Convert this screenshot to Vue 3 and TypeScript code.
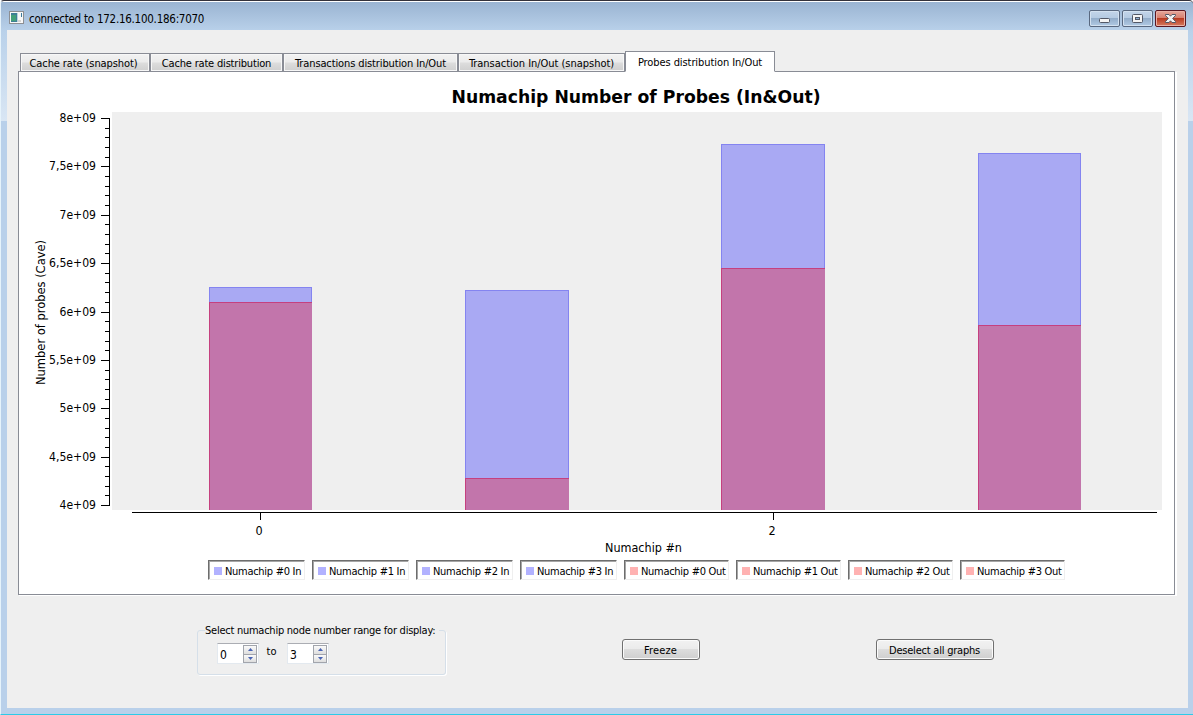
<script setup lang="ts">
import { ref } from 'vue'

interface Tab { label: string; width: number; spacing: number }
interface Bar { x: number; width: number; incoming: number; outgoing: number }

const tabs: Tab[] = [
  { label: 'Cache rate (snapshot)', width: 130, spacing: -0.1 },
  { label: 'Cache rate distribution', width: 133, spacing: -0.18 },
  { label: 'Transactions distribution In/Out', width: 175, spacing: -0.12 },
  { label: 'Transaction In/Out (snapshot)', width: 167, spacing: -0.03 },
  { label: 'Probes distribution In/Out', width: 150, spacing: -0.08 },
]
const active = ref(4)

const BASE = 510
const bars: Bar[] = [
  { x: 209, width: 103, incoming: 287, outgoing: 302 },
  { x: 465, width: 104, incoming: 290, outgoing: 478 },
  { x: 721, width: 104, incoming: 144, outgoing: 268 },
  { x: 978, width: 103, incoming: 153, outgoing: 325 },
]

const yLabels = ['8e+09', '7,5e+09', '7e+09', '6,5e+09', '6e+09', '5,5e+09', '5e+09', '4,5e+09', '4e+09']
const yTicks = Array.from({ length: 41 }, (_, i) => ({
  y: Math.round(118 + i * 9.675),
  major: i % 5 === 0,
  label: i % 5 === 0 ? yLabels[i / 5] : '',
}))

const legend = [
  ...[0, 1, 2, 3].map((n) => ({ text: `Numachip #${n} In`, kind: 'in' })),
  ...[0, 1, 2, 3].map((n) => ({ text: `Numachip #${n} Out`, kind: 'out' })),
]

const range = ref([0, 3])
function step(i: number, by: number) {
  range.value[i] = Math.min(3, Math.max(0, range.value[i] + by))
}
</script>

<template>
  <div class="window">
    <header class="titlebar">
      <svg class="app-icon" width="16" height="14" viewBox="0 0 16 14" shape-rendering="crispEdges">
        <rect x="0" y="0" width="15" height="13" fill="#8d8f93" />
        <rect x="1" y="1" width="13" height="11" fill="#f8f8f8" />
        <rect x="2" y="2" width="6" height="9" fill="#3f7f96" />
        <rect x="2" y="4" width="5" height="6" fill="#43a07a" />
        <rect x="8" y="2" width="1" height="9" fill="#b9d3dc" />
        <rect x="12" y="2" width="1" height="4" fill="#3b7a9c" />
        <rect x="9" y="9" width="3" height="2" fill="#d5d5d5" />
      </svg>
      <span class="title">connected to 172.16.100.186:7070</span>
      <div class="controls">
        <button class="ctl" aria-label="Minimize">
          <svg width="29" height="15" viewBox="0 0 29 15"><rect x="9.500" y="7.500" width="10" height="4" rx="1" fill="#f4f4f4" stroke="#535866" /></svg>
        </button>
        <button class="ctl" aria-label="Maximize">
          <svg width="29" height="15" viewBox="0 0 29 15"><rect x="9.500" y="3.500" width="10" height="8" rx="1" fill="#f4f4f4" stroke="#535866" /><rect x="12.500" y="6.500" width="4" height="2" fill="#8fb0d4" stroke="#535866" /></svg>
        </button>
        <button class="ctl close" aria-label="Close">
          <svg width="29" height="15" viewBox="0 0 29 15"><path d="M9.500 3.500H13L14.500 5.200L16 3.500H19.500V4.500L16.700 7.500L19.500 10.500V11.500H16L14.500 9.800L13 11.500H9.500V10.500L12.300 7.500L9.500 4.500Z" fill="#f2f2f2" stroke="#535866" /></svg>
        </button>
      </div>
    </header>

    <main class="client">
      <nav class="tabs">
        <button
          v-for="(t, i) in tabs"
          :key="t.label"
          class="tab"
          :class="{ active: i === active }"
          :style="{ width: t.width + 'px', letterSpacing: t.spacing + 'px' }"
          @click="active = i"
        >{{ t.label }}</button>
      </nav>

      <section class="panel">
        <svg class="chart" width="1155" height="487" viewBox="19 72 1155 487">
          <text class="heading" x="451.500" y="103" textLength="369" lengthAdjust="spacingAndGlyphs">Numachip Number of Probes (In&amp;Out)</text>
          <g shape-rendering="crispEdges">
            <rect x="112" y="112" width="1050" height="398" fill="#efefef" />
            <g v-for="b in bars" :key="b.x">
              <rect :x="b.x" :y="b.incoming" :width="b.width" :height="BASE - b.incoming" fill="#a9a9f3" />
              <path :d="`M${b.x + 0.5} ${BASE}V${b.incoming + 0.5}H${b.x + b.width - 0.5}V${BASE}`" fill="none" stroke="#8484f0" />
              <rect :x="b.x" :y="b.outgoing" :width="b.width" :height="BASE - b.outgoing" fill="#c275ab" />
              <path :d="`M${b.x + 0.5} ${BASE}V${b.outgoing + 0.5}H${b.x + b.width}`" fill="none" stroke="#c5407f" />
            </g>
            <path d="M109.500 118V506M132 512.500H1157M260.500 512V520M773.500 512V520" stroke="#000" />
            <path v-for="t in yTicks" :key="t.y" :d="`M${t.major ? 101 : 105} ${t.y + 0.5}H110`" stroke="#000" />
          </g>
          <template v-for="t in yTicks" :key="t.y">
            <text
              v-if="t.major"
              class="num"
              :x="t.label.length > 5 ? 49 : 59.500"
              :y="t.y + 4"
              :textLength="t.label.length > 5 ? 47 : 36.500"
              lengthAdjust="spacingAndGlyphs"
            >{{ t.label }}</text>
          </template>
          <text class="num" x="255.500" y="535">0</text>
          <text class="num" x="768.500" y="535">2</text>
          <text class="num" x="605" y="552" textLength="77" lengthAdjust="spacingAndGlyphs">Numachip #n</text>
          <text class="num" transform="translate(44.500 385) rotate(-90)" textLength="145" lengthAdjust="spacingAndGlyphs">Number of probes (Cave)</text>
        </svg>
        <div class="legend">
          <div v-for="l in legend" :key="l.text" class="entry" :class="l.kind">
            <i class="swatch"></i><span class="name">{{ l.text }}</span>
          </div>
        </div>
      </section>

      <footer class="bottom">
        <fieldset class="group">
          <legend class="caption">Select numachip node number range for display:</legend>
          <div class="row">
            <template v-for="(v, i) in range" :key="i">
              <span v-if="i" class="to">to</span>
              <div class="spin">
                <span class="value">{{ v }}</span>
                <div class="arrows">
                  <button aria-label="Increase" @click="step(i, 1)"><svg width="5" height="3" viewBox="0 0 5 3"><path d="M2.500 0L5 3H0Z" fill="#4964b4" /></svg></button>
                  <button aria-label="Decrease" @click="step(i, -1)"><svg width="5" height="3" viewBox="0 0 5 3"><path d="M0 0H5L2.500 3Z" fill="#4964b4" /></svg></button>
                </div>
              </div>
            </template>
          </div>
        </fieldset>
        <button class="push freeze">Freeze</button>
        <button class="push deselect">Deselect all graphs</button>
      </footer>
    </main>
  </div>
</template>

<style>
html, body { margin: 0; overflow: hidden; }
</style>

<style scoped>
* { box-sizing: border-box; }
button { font: inherit; color: inherit; padding: 0; margin: 0; border: 0; border-radius: 0; }
.window {
  width: 1193px;
  height: 715px;
  display: flex;
  flex-direction: column;
  padding: 2px 5px 6px 6px;
  border-top: 1px solid #33313a;
  border-bottom: 1px solid #2ccbe8;
  border-left: 1px solid #e6f3fb;
  border-radius: 4px 4px 0 0;
  background:
    linear-gradient(#fff, #fff) 0 0 / 100% 1px no-repeat,
    linear-gradient(#9ab4d2, #b9d1ea 29px) 0 1px / 100% 29px no-repeat,
    linear-gradient(#b9d1ea, #d9e6f4) 0 30px / 100% 90px no-repeat,
    #b9d0ea;
  font-family: "DejaVu Sans Condensed", "DejaVu Sans", sans-serif;
  font-stretch: condensed;
  font-size: 11px;
  color: #000;
}
.titlebar { height: 27px; flex: none; display: flex; align-items: flex-start; padding-left: 2px; }
.app-icon { margin-top: 8px; }
.title { margin: 8px 0 0 4px; line-height: 16px; font-size: 11.500px; letter-spacing: -0.25px; white-space: nowrap; }
.controls { margin: 7px 2px 0 auto; display: flex; gap: 2px; }
.ctl {
  width: 31px; height: 17px;
  border: 1px solid #59687f;
  border-radius: 2px;
  box-shadow: inset 0 0 0 1px #d3e1f0;
  background: linear-gradient(#c3d5e9 0, #b4cae2 48%, #93adca 50%, #b1cae4 100%);
}
.ctl svg { display: block; }
.ctl.close {
  border-color: #5a1721;
  box-shadow: inset 0 0 0 1px #eab0a5;
  background: linear-gradient(#e5a79b 0, #d77e6d 48%, #b93b22 50%, #d67b60 100%);
}
.client { flex: 1; display: flex; flex-direction: column; padding: 21px 13px 0 11px; background: #efefef; }
.tabs { display: flex; align-items: flex-end; height: 21px; padding-left: 2px; position: relative; z-index: 1; margin-bottom: -1px; flex: none; }
.tab {
  height: 19px;
  flex: none;
  border: 1px solid #898c95;
  box-shadow: inset 0 0 0 1px #f7f7f7;
  background: linear-gradient(#f2f2f2 0, #ebebeb 48%, #dddddd 52%, #cfcfcf 100%);
  white-space: nowrap;
  line-height: 16px;
  padding-top: 2px;
}
.tab:first-child { padding-right: 3px; }
.tab.active { height: 21px; background: #fff; border-bottom-color: #fff; line-height: 18px; box-shadow: none; }
.panel { width: 1157px; height: 524px; flex: none; border: 1px solid #898c95; background: #fff; box-shadow: 1px 1px #fff, 2px 1px #fff; display: flex; flex-direction: column; }
.chart { display: block; flex: none; }
.heading { font: bold 18.500px "DejaVu Sans", sans-serif; }
.num { font-size: 12.500px; }
.legend { display: flex; gap: 7px; padding: 1px 0 0 189px; }
.entry {
  width: 97px; height: 20px;
  display: flex; align-items: center; gap: 3px;
  padding-left: 4px;
  border: 1px solid;
  border-color: #6d6d6d #efefef #efefef #6d6d6d;
  box-shadow: inset 1px 1px #a6a6a6;
  white-space: nowrap;
}
.entry.out { width: 105px; }
.name { letter-spacing: -0.29px; padding-top: 2px; }
.swatch { flex: none; width: 8px; height: 8px; margin: 2px 0 0 1px; background: #b2b2ff; }
.out .swatch { background: #ffb2b2; }
.bottom { display: flex; align-items: flex-start; padding-left: 179px; }
.group { width: 249px; min-width: 0; flex: none; height: 52px; margin: 28px 0 0; padding: 0 0 0 19px; border: 1px solid #d5dfe9; border-radius: 3px; box-shadow: 1px 1px #fff; }
.caption { margin-left: -12px; padding: 1px 0 0; width: 234px; line-height: 14px; height: 15px; white-space: nowrap; letter-spacing: -0.25px; }
.row { display: flex; align-items: flex-start; margin-top: 5px; }
.to { width: 28px; padding-right: 3px; text-align: center; line-height: 17px; }
.spin { width: 42px; height: 21px; display: flex; background: #fff; border: 1px solid #e3e9ef; border-top-color: #abadb3; }
.value { flex: 1; padding-left: 2px; line-height: 22px; font-size: 12px; }
.arrows { width: 14px; height: 18px; margin: 1px 1px 0 0; border: 1px solid #a2a5ac; display: flex; flex-direction: column; }
.arrows button { flex: 1; display: flex; align-items: center; justify-content: center; background: linear-gradient(#fafafa, #dedede); }
.arrows button + button { border-top: 1px solid #a2a5ac; }
.push {
  height: 21px; margin-top: 44px;
  border: 1px solid #707070;
  border-radius: 3px;
  box-shadow: inset 0 0 0 1px #fbfbfb;
  background: linear-gradient(#f2f2f2 0, #ebebeb 48%, #dddddd 50%, #cfcfcf 100%);
  line-height: 17px;
  padding: 2px 1px 0 0;
  white-space: nowrap;
}
.freeze { width: 78px; margin-left: 176px; letter-spacing: 0.1px; }
.deselect { width: 118px; margin-left: 176px; letter-spacing: -0.22px; }
</style>
